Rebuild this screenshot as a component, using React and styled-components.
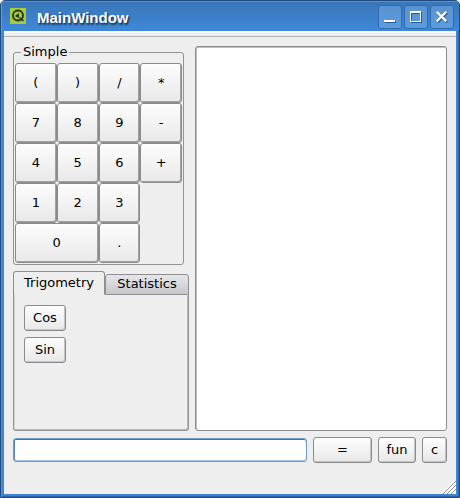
import React, { useState } from "react";
import styled, { createGlobalStyle } from "styled-components";

const GlobalStyle = createGlobalStyle`
  *, *::before, *::after { box-sizing: border-box; }
  body { margin: 0; background: #fff; }
  body, button, input, textarea {
    font-family: "DejaVu Sans", sans-serif;
    font-size: 13px;
    line-height: 16px;
    color: #000;
  }
`;

const Window = styled.div`
  display: flex;
  flex-direction: column;
  min-height: 100vh;
  padding: 0 3px 3px;
  background: #3d84d0;
  border: 1px solid #1f4a7c;
  border-radius: 5px 5px 0 0;
  box-shadow: inset 1px 0 #4f97e2, inset -1px 0 #2c66a8, inset 0 -1px #2c66a8;
`;

const TitleBar = styled.header`
  display: flex;
  align-items: center;
  height: 30px;
  margin: 0 -3px;
  padding: 0 5px 0 9px;
  border-radius: 4px 4px 0 0;
  background: linear-gradient(#3975b8, #3f89d8);
  box-shadow: inset 0 1px #5590cf, inset 1px 0 #5b9fe4;
`;

const Title = styled.h1`
  flex: 1;
  margin: 3px 0 0 11px;
  font: bold 15px/18px "Liberation Sans", sans-serif;
  color: #fff;
  text-shadow: 1px 1px 1px #1c3f68, 1px 2px 2px #1c3f68;
`;

const WindowControls = styled.div`
  display: flex;
  gap: 2px;
  margin-top: 2px;
`;

const WindowButton = styled.button`
  display: flex;
  width: 24px;
  height: 24px;
  padding: 0;
  border: 1px solid #306bb0;
  border-radius: 3px;
  background: linear-gradient(#5a92d0, #5b9ce0);
`;

const Content = styled.main`
  flex: 1;
  display: flex;
  flex-direction: column;
  background: #eee;
  border-top: 2px solid #fafafa;
`;

const ToolStrip = styled.div`
  height: 4px;
  border-bottom: 1px solid #b4b4b4;
`;

const Workspace = styled.div`
  flex: 1;
  display: flex;
  gap: 6px;
  padding: 7px 9px 6px;
`;

const Sidebar = styled.div`
  display: flex;
  flex-direction: column;
  flex: 0 0 176px;
`;

const GroupBox = styled.fieldset`
  min-width: 0;
  margin: 0 5px 6px 0;
  padding: 3px 1px 1px;
  border: 1px solid #939393;
  border-radius: 3px;
`;

const Legend = styled.legend`
  margin-left: 6px;
  padding: 0 2px;
`;

const Keypad = styled.div`
  display: grid;
  grid-template-columns: repeat(4, 1fr);
  grid-auto-rows: 40px;
`;

const Button = styled.button`
  padding: 0;
  border: 1px solid #8b8b8d;
  border-radius: 3px;
  background: linear-gradient(#fdfdfd, #e8e8e8);
  box-shadow: inset -1px -1px #c4c4c6;
`;

const Key = styled(Button)`
  grid-column: span ${(p) => p.$span || 1};
  box-shadow: inset -1px -1px #a2a2a4;
`;

const ActionButton = styled(Button)`
  flex: none;
  width: ${(p) => p.$width}px;
  height: 26px;
`;

const Tabs = styled.div`
  flex: 1;
  display: flex;
  flex-direction: column;
`;

const TabList = styled.div`
  display: flex;
  height: 24px;
`;

const Tab = styled.button`
  flex: 0 0 ${(p) => (p.$active ? 92 : 84)}px;
  height: ${(p) => (p.$active ? 24 : 21)}px;
  margin-top: ${(p) => (p.$active ? 0 : 3)}px;
  padding: 0 0 1px;
  border: 1px solid #8f8f91;
  border-bottom-color: ${(p) => (p.$active ? "transparent" : "#8f8f91")};
  border-radius: 3px 3px 0 0;
  background: ${(p) => (p.$active ? "#eee" : "linear-gradient(#e6e6ea, #c6c6cc)")};
`;

const TabPanel = styled.div`
  flex: 1;
  display: flex;
  flex-direction: column;
  align-items: flex-start;
  gap: 6px;
  margin-top: -1px;
  padding: 11px 10px;
  border: 1px solid #939393;
  border-top: 0;
  border-radius: 0 0 3px 3px;
  box-shadow: inset -1px -1px #b9b9b9, inset 1px 0 #d4d4d4;
`;

const History = styled.textarea`
  flex: 1;
  min-width: 0;
  margin: 2px 0 0;
  padding: 4px;
  resize: none;
  outline: 0;
  border: 1px solid #8d8d8d;
  border-radius: 3px;
  background: #fff;
  box-shadow: inset 0 1px #c0c0c0, inset 1px 0 #c0c0c0;
`;

const EntryRow = styled.form`
  display: flex;
  align-items: center;
  gap: 6px;
  padding: 0 9px;
`;

const Entry = styled.input`
  flex: 1;
  min-width: 0;
  height: 24px;
  padding: 0 4px;
  outline: 0;
  border: 1px solid #6f9cc4;
  border-radius: 3px;
  background: #fff;
  box-shadow: inset 0 1px #4e7298, inset 1px 0 #5b83aa, inset 0 -1px #a3c2dc;
`;

const StatusBar = styled.footer`
  display: flex;
  justify-content: flex-end;
  align-items: flex-end;
  height: 31px;
`;

const KEYS = ["(", ")", "/", "*", "7", "8", "9", "-", "4", "5", "6", "+", "1", "2", "3"];
const TABS = { Trigometry: ["Cos", "Sin"], Statistics: [] };

const AppIcon = () => (
  <svg width="16" height="16" viewBox="0 0 16 16" aria-hidden="true">
    <rect width="16" height="16" fill="#a4cc3a" />
    <circle cx="8" cy="7.500" r="5" fill="none" stroke="#25301c" strokeWidth="1.800" />
    <path d="M5 8L9 5V10Z" fill="#25301c" />
    <path d="M6 8H9M9.500 9.500L13.500 13" fill="none" stroke="#25301c" strokeWidth="1.600" />
  </svg>
);

const ControlIcon = ({ d }) => (
  <svg width="22" height="22" viewBox="0 0 22 22" aria-hidden="true">
    <path d={d} fill="#2b5a90" fillRule="evenodd" transform="translate(1 1)" />
    <path d={d} fill="#fff" fillRule="evenodd" />
  </svg>
);

const MINIMIZE = "M5 14H16V16H5Z";
const MAXIMIZE = "M5 5H16V16H5ZM6 7V15H15V7Z";
const CLOSE = "M5 6.500L6.500 5L10.500 9L14.500 5L16 6.500L12 10.500L16 14.500L14.500 16L10.500 12L6.500 16L5 14.500L9 10.500Z";

const SizeGrip = () => (
  <svg width="13" height="13" viewBox="0 0 13 13" aria-hidden="true">
    <path d="M0 13L13 0M4 13L13 4M8 13L13 8" stroke="#fff" strokeWidth="3" />
    <path d="M0 13L13 0M4 13L13 4M8 13L13 8" stroke="#8f8f8f" strokeWidth="1" />
  </svg>
);

export default function App() {
  const [entry, setEntry] = useState("");
  const [tab, setTab] = useState("Trigometry");
  const append = (text) => setEntry((value) => value + text);

  return (
    <>
      <GlobalStyle />
      <Window>
        <TitleBar>
          <AppIcon />
          <Title>MainWindow</Title>
          <WindowControls>
            <WindowButton aria-label="Minimize"><ControlIcon d={MINIMIZE} /></WindowButton>
            <WindowButton aria-label="Maximize"><ControlIcon d={MAXIMIZE} /></WindowButton>
            <WindowButton aria-label="Close"><ControlIcon d={CLOSE} /></WindowButton>
          </WindowControls>
        </TitleBar>
        <Content>
          <ToolStrip />
          <Workspace>
            <Sidebar>
              <GroupBox>
                <Legend>Simple</Legend>
                <Keypad>
                  {KEYS.map((k) => (
                    <Key key={k} onClick={() => append(k)}>{k}</Key>
                  ))}
                  <span />
                  <Key $span={2} onClick={() => append("0")}>0</Key>
                  <Key onClick={() => append(".")}>.</Key>
                </Keypad>
              </GroupBox>
              <Tabs>
                <TabList role="tablist">
                  {Object.keys(TABS).map((name) => (
                    <Tab
                      key={name}
                      role="tab"
                      id={`tab-${name}`}
                      aria-selected={tab === name}
                      aria-controls="functions"
                      $active={tab === name}
                      onClick={() => setTab(name)}
                    >
                      {name}
                    </Tab>
                  ))}
                </TabList>
                <TabPanel role="tabpanel" id="functions" aria-labelledby={`tab-${tab}`}>
                  {TABS[tab].map((fn) => (
                    <ActionButton key={fn} $width={42} onClick={() => append(fn)}>{fn}</ActionButton>
                  ))}
                </TabPanel>
              </Tabs>
            </Sidebar>
            <History aria-label="History" readOnly />
          </Workspace>
          <EntryRow onSubmit={(e) => e.preventDefault()}>
            <Entry aria-label="Expression" value={entry} onChange={(e) => setEntry(e.target.value)} />
            <ActionButton $width={59}>=</ActionButton>
            <ActionButton type="button" $width={38}>fun</ActionButton>
            <ActionButton type="button" $width={25} onClick={() => setEntry("")}>c</ActionButton>
          </EntryRow>
          <StatusBar><SizeGrip /></StatusBar>
        </Content>
      </Window>
    </>
  );
}
